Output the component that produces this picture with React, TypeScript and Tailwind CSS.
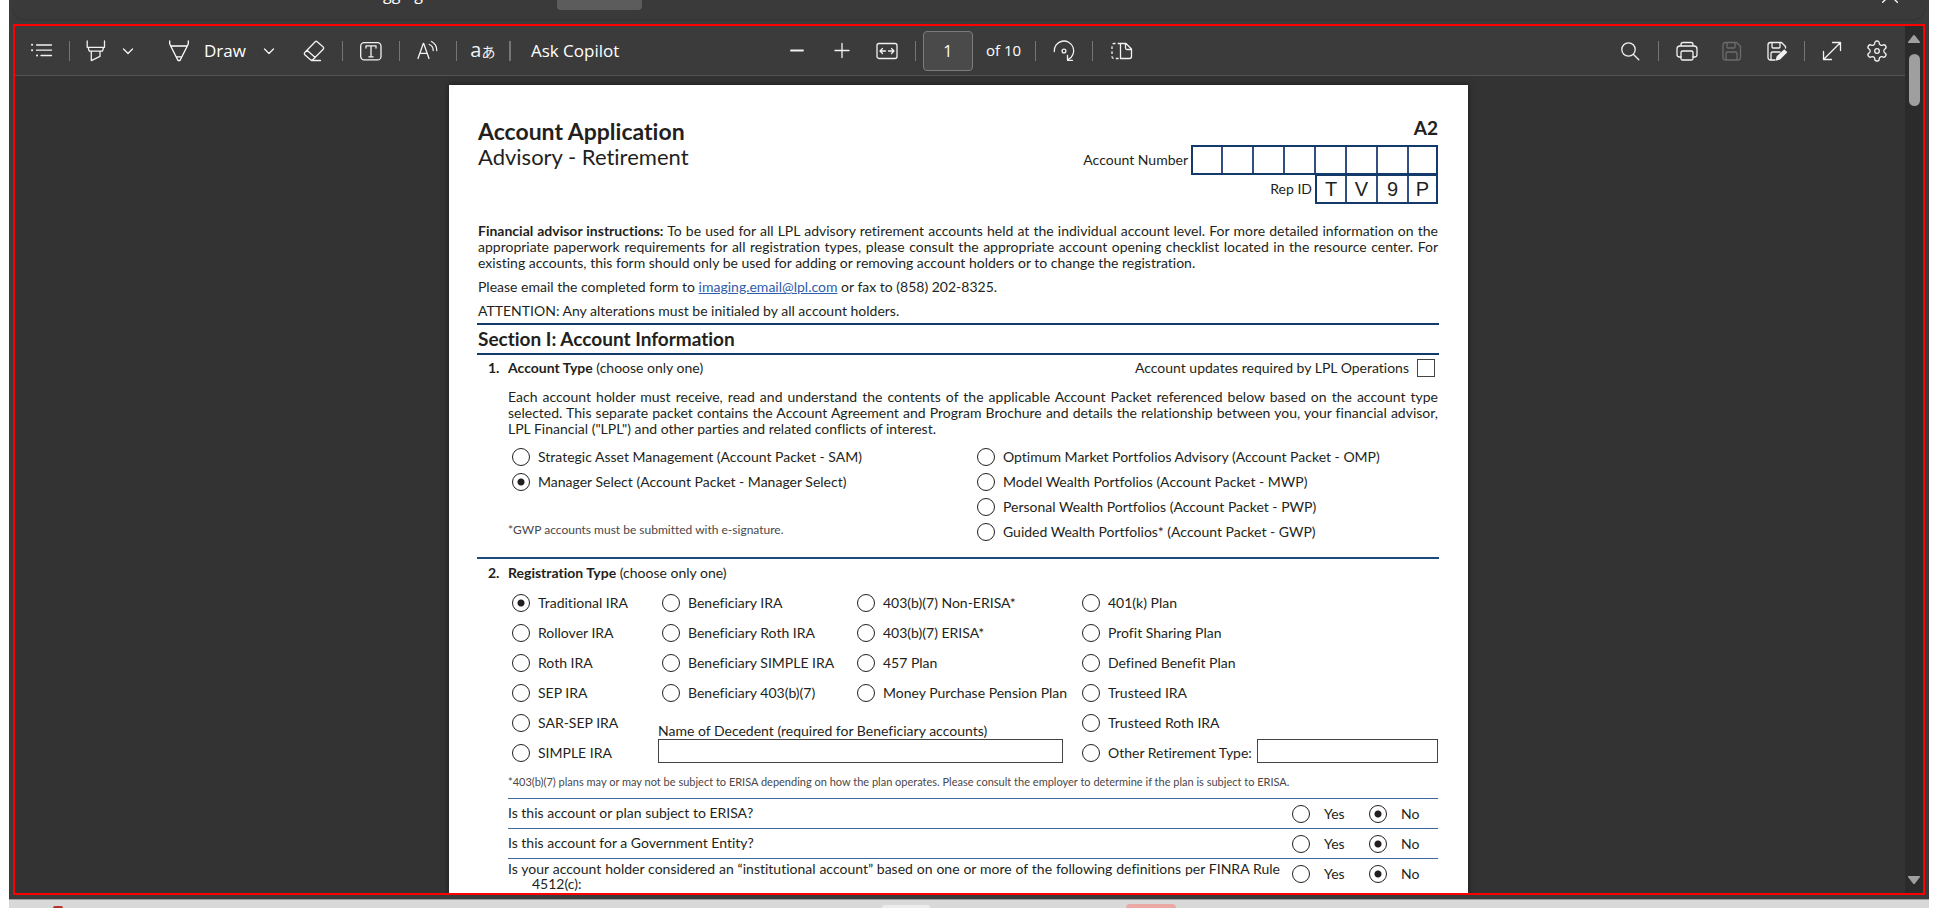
import React from "react";

const Icon = ({ children, className = "size-6 shrink-0" }: { children: React.ReactNode; className?: string }) => (
  <svg
    viewBox="0 0 24 24"
    className={className}
    fill="none"
    stroke="currentColor"
    strokeWidth="1.3"
    strokeLinecap="round"
    strokeLinejoin="round"
    aria-hidden="true"
  >
    {children}
  </svg>
);

const Chevron = () => (
  <Icon>
    <path d="M7.5 10 12 14.500l4.500-4.500" />
  </Icon>
);

const Divider = ({ className = "mx-2 w-px" }: { className?: string }) => (
  <span className={`h-5 shrink-0 bg-[#757575] ${className}`} />
);

const ToolButton = ({
  label,
  className = "w-10",
  disabled = false,
  children,
}: {
  label: string;
  className?: string;
  disabled?: boolean;
  children: React.ReactNode;
}) => (
  <button
    type="button"
    aria-label={label}
    disabled={disabled}
    className={`flex h-10 shrink-0 items-center justify-center text-[#f2f2f2] disabled:text-[#6c6c6c] ${className}`}
  >
    {children}
  </button>
);

function Toolbar() {
  return (
    <div
      role="toolbar"
      aria-label="PDF toolbar"
      className="grid h-[50px] shrink-0 grid-cols-[1fr_auto_1fr] items-center border-b border-[#525252] bg-[#3b3b3b] text-[17px] text-white"
    >
      <div className="flex items-center">
        <ToolButton label="Contents" className="w-[52px]">
          <Icon>
            <path d="M7.5 6h15M7.5 11.2h15M12 16.5h10.5" />
            <path d="M3 5.8h.1M3 11.2h.1M8 16.5h.1" strokeWidth="2" />
          </Icon>
        </ToolButton>
        <Divider className="mr-1.5 ml-0.5 w-px" />
        <ToolButton label="Highlight">
          <Icon>
            <path d="M3.2 2v6.3h17.3V2M4.2 8.5l1 3.7h13.3l1-3.7M7.3 12.4v9.2l8.7-4.2v-5" />
          </Icon>
        </ToolButton>
        <ToolButton label="Highlight colours" className="w-6">
          <Chevron />
        </ToolButton>
        <button type="button" className="ml-[27px] flex h-10 items-center gap-[13px]">
          <Icon>
            <path d="M2.700 2v2.800l1 2.200 7.300 14.500h2L20.300 7l1-2.200V2M3.700 7h16.600M10 17.800h4" />
          </Icon>
          Draw
        </button>
        <ToolButton label="Draw options" className="ml-[11px] w-6">
          <Chevron />
        </ToolButton>
        <ToolButton label="Erase" className="ml-[13px] w-10">
          <Icon>
            <path d="M13.200 2.700a1.500 1.500 0 0 1 2 0l6 5.300a1.500 1.500 0 0 1 0 2.200L11 20.500a2 2 0 0 1-2.800 0L2.800 15.700a1.500 1.500 0 0 1 0-2.200zM5 11.300l8.200 7.200M9.500 21.500h9" />
          </Icon>
        </ToolButton>
        <Divider />
        <ToolButton label="Add text">
          <Icon>
            <rect x="1.700" y="3.700" width="20.300" height="17.200" rx="3.500" />
            <path d="M7 9V6.800h10V9M12 6.800v11M9.800 17.800h4.400" />
          </Icon>
        </ToolButton>
        <Divider />
        <ToolButton label="Read aloud">
          <Icon>
            <path d="M2 19.500 7.300 4.500h.4l5.300 15M4 14.300h7M13.200 5.500c2.600 1 4 3.300 4 6M15.500 2.500c3.200 1.600 5.200 5 5.300 9" />
          </Icon>
        </ToolButton>
        <Divider />
        <ToolButton label="Translate" className="w-9">
          <span className="flex items-baseline font-['Open_Sans','Noto_Sans_CJK_JP',sans-serif]">
            <span className="text-xl leading-5">a</span>
            <span className="text-sm leading-5">あ</span>
          </span>
        </ToolButton>
        <Divider className="mx-2 w-0.5" />
        <button type="button" className="ml-3 h-10">
          Ask Copilot
        </button>
      </div>

      <div className="flex items-center pr-1">
        <ToolButton label="Zoom out" className="w-[45px]">
          <Icon>
            <path d="M6 11.500h12" strokeWidth="1.800" />
          </Icon>
        </ToolButton>
        <ToolButton label="Zoom in" className="w-[45px]">
          <Icon>
            <path d="M5 11.500h14M12 4.500v14" />
          </Icon>
        </ToolButton>
        <ToolButton label="Fit to width" className="w-[45px]">
          <Icon>
            <rect x="2" y="4.500" width="20" height="15" rx="2" />
            <path d="M5 12h5.500M7.500 9.500 5 12l2.500 2.500M13.500 12H19M16.500 9.500 19 12l-2.500 2.500" />
          </Icon>
        </ToolButton>
        <Divider className="mr-[7px] ml-[5px] w-px" />
        <input
          aria-label="Page number"
          defaultValue="1"
          className="h-10 w-[50px] rounded-sm border border-[#7c7c7c] bg-[#4a4a4a] text-center text-base text-white"
        />
        <span className="ml-[13px] text-[15px]">of 10</span>
        <Divider className="mr-2 ml-[14px] w-px" />
        <ToolButton label="Rotate">
          <Icon>
            <path d="M2.300 12.500a9.700 9.700 0 1 1 14.200 7.800M15.500 16.300v5h5" />
            <circle cx="12" cy="12" r="1.900" />
          </Icon>
        </ToolButton>
        <Divider />
        <ToolButton label="Page view">
          <Icon>
            <path d="M11.500 4.500h5.500l5.500 5.500v7.500a2 2 0 0 1-2 2h-9zM16.500 4.500v4.500a1.500 1.500 0 0 0 1.500 1.500h4.500" />
            <path d="M11.500 4.500H5a2 2 0 0 0-2 2v11a2 2 0 0 0 2 2h6.500" strokeDasharray="2.800 2.200" strokeLinecap="butt" />
          </Icon>
        </ToolButton>
      </div>

      <div className="flex items-center justify-end pr-2">
        <ToolButton label="Find">
          <Icon>
            <circle cx="10.500" cy="10.500" r="6.700" />
            <path d="m15.500 15.500 5.300 5.300" />
          </Icon>
        </ToolButton>
        <Divider />
        <ToolButton label="Print">
          <Icon>
            <path d="M6 18H4.500A2.500 2.500 0 0 1 2 15.500V10a3 3 0 0 1 3-3h14a3 3 0 0 1 3 3v5.500a2.500 2.500 0 0 1-2.500 2.500H18M6 7V5.500a2 2 0 0 1 2-2h8a2 2 0 0 1 2 2V7" />
            <rect x="6" y="12" width="12" height="9" rx="1.500" />
          </Icon>
        </ToolButton>
        <ToolButton label="Save" disabled className="ml-[5px] w-10">
          <Icon>
            <path d="M5.500 3.500h11l4 4v11a2.500 2.500 0 0 1-2.500 2.500H5.500A2.500 2.500 0 0 1 3 18.500V6a2.500 2.500 0 0 1 2.500-2.500zM7 3.500V8a1 1 0 0 0 1 1h6a1 1 0 0 0 1-1V3.500M6 21v-6.500a1.500 1.500 0 0 1 1.500-1.500h8a1.500 1.500 0 0 1 1.500 1.500V21" />
          </Icon>
        </ToolButton>
        <ToolButton label="Save as" className="ml-[5px] w-10">
          <Icon>
            <path d="M20.500 9V7.500l-4-4h-11A2.500 2.500 0 0 0 3 6v12.500A2.500 2.500 0 0 0 5.500 21H10M7 3.500V8a1 1 0 0 0 1 1h6a1 1 0 0 0 1-1V3.500M6 21v-6.500A1.500 1.500 0 0 1 7.500 13H15" />
            <path d="m11.500 20.800 1-3.300 6.800-6.200 2 2-6.500 6.500z" fill="currentColor" strokeWidth="1.600" />
          </Icon>
        </ToolButton>
        <Divider className="mx-[7px] w-px" />
        <ToolButton label="Full screen">
          <Icon>
            <path d="M3.500 20.500 20.500 3.500M12.500 3.500h8v8M3.500 12.500v8h8" />
          </Icon>
        </ToolButton>
        <ToolButton label="Settings" className="ml-[5px] w-10">
          <Icon>
            <path d="M12.220 2h-.44a2 2 0 0 0-2 2v.18a2 2 0 0 1-1 1.730l-.43.250a2 2 0 0 1-2 0l-.15-.08a2 2 0 0 0-2.730.730l-.22.380a2 2 0 0 0 .730 2.730l.150.100a2 2 0 0 1 1 1.720v.510a2 2 0 0 1-1 1.740l-.15.090a2 2 0 0 0-.73 2.730l.220.380a2 2 0 0 0 2.730.730l.150-.080a2 2 0 0 1 2 0l.430.250a2 2 0 0 1 1 1.730V20a2 2 0 0 0 2 2h.440a2 2 0 0 0 2-2v-.180a2 2 0 0 1 1-1.730l.430-.250a2 2 0 0 1 2 0l.150.080a2 2 0 0 0 2.730-.730l.220-.390a2 2 0 0 0-.730-2.730l-.150-.080a2 2 0 0 1-1-1.740v-.500a2 2 0 0 1 1-1.740l.150-.090a2 2 0 0 0 .730-2.730l-.220-.380a2 2 0 0 0-2.730-.730l-.150.080a2 2 0 0 1-2 0l-.430-.250a2 2 0 0 1-1-1.730V4a2 2 0 0 0-2-2z" />
            <circle cx="12" cy="12" r="2.300" />
          </Icon>
        </ToolButton>
      </div>
    </div>
  );
}

function Radio({
  name,
  label,
  checked = false,
  gap = "gap-2",
}: {
  name: string;
  label: string;
  checked?: boolean;
  gap?: string;
}) {
  return (
    <label className={`flex items-center whitespace-nowrap ${gap}`}>
      <input
        type="radio"
        name={name}
        defaultChecked={checked}
        className="size-[18px] shrink-0 appearance-none rounded-full border border-[#231f20] checked:bg-[radial-gradient(circle,#231f20_3px,transparent_4px)]"
      />
      {label}
    </label>
  );
}

const Lines = ({ lines }: { lines: React.ReactNode[] }) => (
  <p>
    {lines.map((line, i) => (
      <span key={i} className={`block ${i < lines.length - 1 ? "[text-align-last:justify]" : ""}`}>
        {line}
      </span>
    ))}
  </p>
);

const Heading = ({ n, title }: { n: string; title: string }) => (
  <h3 className="flex">
    <span className="w-[20px] font-bold">{n}</span>
    <span>
      <b>{title}</b> (choose only one)
    </span>
  </h3>
);

const CodeBoxes = ({ values, label }: { values: string[]; label: string }) => (
  <span className="flex border-2 border-[#14396b]">
    {values.map((v, i) => (
      <input
        key={i}
        aria-label={`${label} ${i + 1}`}
        maxLength={1}
        defaultValue={v}
        className="h-[26px] w-[31px] border-l-2 border-[#2f5080] text-center font-['Liberation_Sans',Arial,sans-serif] text-xl first:w-[28px] first:border-l-0 last:w-[29px]"
      />
    ))}
  </span>
);

const Question = ({ name, children }: { name: string; children: React.ReactNode }) => (
  <div className="flex h-[30px] items-start border-t border-[#41689a]">
    <div className="min-w-0 flex-1">{children}</div>
    <div className="flex h-full w-[146px] items-center">
      <div className="w-[77px]">
        <Radio name={name} label="Yes" gap="gap-[14px]" />
      </div>
      <Radio name={name} label="No" checked gap="gap-[14px]" />
    </div>
  </div>
);

const col1 = ["Traditional IRA", "Rollover IRA", "Roth IRA", "SEP IRA", "SAR-SEP IRA", "SIMPLE IRA"];
const col2 = ["Beneficiary IRA", "Beneficiary Roth IRA", "Beneficiary SIMPLE IRA", "Beneficiary 403(b)(7)"];
const col3 = ["403(b)(7) Non-ERISA*", "403(b)(7) ERISA*", "457 Plan", "Money Purchase Pension Plan"];
const col4 = ["401(k) Plan", "Profit Sharing Plan", "Defined Benefit Plan", "Trusteed IRA", "Trusteed Roth IRA"];

function Document() {
  return (
    <article className="mx-auto w-full max-w-[1019px] bg-white pt-[33px] pr-[29px] pb-10 pl-7 font-['Lato',sans-serif] text-sm leading-4 text-[#231f20] shadow-[0_0_6px_rgba(0,0,0,0.5)] [font-variant-ligatures:none]">
      <header className="flex h-[105px] items-start justify-between px-px">
        <div>
          <h1 className="text-[23px] leading-[26px] font-bold">Account Application</h1>
          <p className="text-[22px] leading-[26px]">Advisory - Retirement</p>
        </div>
        <div className="flex flex-col items-end">
          <span className="h-[27px] text-[19px] leading-5 font-bold">A2</span>
          <div className="flex items-center gap-[3px]">
            Account Number
            <CodeBoxes label="Account number" values={["", "", "", "", "", "", "", ""]} />
          </div>
          <div className="-mt-px flex items-center gap-[3px]">
            Rep ID
            <CodeBoxes label="Rep ID" values={["T", "V", "9", "P"]} />
          </div>
        </div>
      </header>

      <div className="flex flex-col gap-2 px-px">
        <Lines
          lines={[
            <>
              <b>Financial advisor instructions:</b> To be used for all LPL advisory retirement accounts held at the
              individual account level. For more detailed information on the
            </>,
            "appropriate paperwork requirements for all registration types, please consult the appropriate account opening checklist located in the resource center. For",
            "existing accounts, this form should only be used for adding or removing account holders or to change the registration.",
          ]}
        />
        <p>
          Please email the completed form to{" "}
          <a href="mailto:imaging.email@lpl.com" className="text-[#2f5cab] underline">
            imaging.email@lpl.com
          </a>{" "}
          or fax to (858) 202-8325.
        </p>
        <p>ATTENTION: Any alterations must be initialed by all account holders.</p>
      </div>

      <h2 className="mt-1 flex h-8 items-center border-y-2 border-[#14396b] px-px text-[19px] leading-6 font-bold">
        Section I: Account Information
      </h2>

      <section className="pr-px pl-[11px]">
        <div className="flex h-[26px] items-center justify-between">
          <Heading n="1." title="Account Type" />
          <label className="flex items-center gap-2 pr-[3px]">
            Account updates required by LPL Operations
            <input type="checkbox" className="size-[18px] appearance-none border border-[#444]" />
          </label>
        </div>
        <div className="mt-2 pl-[20px]">
          <Lines
            lines={[
              "Each account holder must receive, read and understand the contents of the applicable Account Packet referenced below based on the account type",
              "selected. This separate packet contains the Account Agreement and Program Brochure and details the relationship between you, your financial advisor,",
              <>LPL Financial ("LPL") and other parties and related conflicts of interest.</>,
            ]}
          />
          <div className="mt-[11px] flex">
            <div className="flex w-[465px] flex-col gap-[7px] pl-1">
              <Radio name="account-type" label="Strategic Asset Management (Account Packet - SAM)" />
              <Radio name="account-type" label="Manager Select (Account Packet - Manager Select)" checked />
              <p className="-ml-1 pt-6 text-xs text-[#4a4749]">*GWP accounts must be submitted with e-signature.</p>
            </div>
            <div className="flex flex-1 flex-col gap-[7px] pl-1">
              <Radio name="account-type" label="Optimum Market Portfolios Advisory (Account Packet - OMP)" />
              <Radio name="account-type" label="Model Wealth Portfolios (Account Packet - MWP)" />
              <Radio name="account-type" label="Personal Wealth Portfolios (Account Packet - PWP)" />
              <Radio name="account-type" label="Guided Wealth Portfolios* (Account Packet - GWP)" />
            </div>
          </div>
        </div>
      </section>

      <section className="mt-4 border-t-2 border-[#1c4b7c] pt-[6px] pr-px pl-[11px]">
        <Heading n="2." title="Registration Type" />
        <div className="mt-[7px] pl-[20px]">
          <div className="flex pl-1">
            <div className="grid w-[150px] auto-rows-[30px]">
              {col1.map((l, i) => (
                <Radio key={l} name="registration" label={l} checked={i === 0} />
              ))}
            </div>
            <div className="w-[420px]">
              <div className="flex">
                <div className="grid w-[195px] auto-rows-[30px]">
                  {col2.map((l) => (
                    <Radio key={l} name="registration" label={l} />
                  ))}
                </div>
                <div className="grid auto-rows-[30px]">
                  {col3.map((l) => (
                    <Radio key={l} name="registration" label={l} />
                  ))}
                </div>
              </div>
              <label className="-ml-1 flex w-[405px] flex-col pt-[15px]">
                Name of Decedent (required for Beneficiary accounts)
                <input className="h-6 w-full border border-[#444]" />
              </label>
            </div>
            <div className="flex-1">
              <div className="grid auto-rows-[30px]">
                {col4.map((l) => (
                  <Radio key={l} name="registration" label={l} />
                ))}
              </div>
              <div className="flex h-[30px] items-center">
                <div className="w-[175px]">
                  <Radio name="registration" label="Other Retirement Type:" />
                </div>
                <input aria-label="Other retirement type" className="mb-1 h-6 min-w-0 flex-1 border border-[#444]" />
              </div>
            </div>
          </div>
          <p className="mt-[6px] h-[24px] text-[11px] leading-4 text-[#4a4749]">
            *403(b)(7) plans may or may not be subject to ERISA depending on how the plan operates. Please consult the
            employer to determine if the plan is subject to ERISA.
          </p>
          <Question name="erisa">
            <p className="pt-[6px]">Is this account or plan subject to ERISA?</p>
          </Question>
          <Question name="government">
            <p className="pt-[6px]">Is this account for a Government Entity?</p>
          </Question>
          <Question name="institutional">
            <p className="mr-3 pt-0.5 leading-[15px]">
              <span className="block [text-align-last:justify]">
                Is your account holder considered an “institutional account” based on one or more of the following
                definitions per FINRA Rule
              </span>
              <span className="block pl-6">4512(c):</span>
            </p>
          </Question>
        </div>
      </section>
    </article>
  );
}

const Scrollbar = () => (
  <div className="flex w-[18px] shrink-0 flex-col items-center bg-[#2b2b2b] pt-2 pb-2 text-[#9f9f9f]">
    <svg viewBox="0 0 14 10" className="h-[10px] w-[14px]" fill="currentColor" aria-hidden="true">
      <path d="M6 1.500a1.300 1.300 0 0 1 2 0l5 6.500q.5 1-.7 1H1.700Q.5 9 1 8z" />
    </svg>
    <div className="mt-[10px] h-[52px] w-[11px] rounded-full bg-[#9f9f9f]" />
    <svg viewBox="0 0 14 10" className="mt-auto h-[10px] w-[14px]" fill="currentColor" aria-hidden="true">
      <path d="M6 8.500a1.300 1.300 0 0 0 2 0l5-6.500q.5-1-.7-1H1.700Q.5 1 1 2z" />
    </svg>
  </div>
);

export default function App() {
  return (
    <div className="flex h-screen flex-col bg-white px-[9px] pb-[11px] font-['Open_Sans','Noto_Sans',sans-serif]">
      <main className="flex min-h-0 flex-1 flex-col bg-[#3b3b3b] px-1 pb-1">
        <div className="mb-1 flex h-5 shrink-0 items-start overflow-hidden rounded-b-xl border-b border-[#353535] bg-[#3a3a3a] pl-[370px] text-white shadow-[0_1px_1px_#363636]">
          <span className="-mt-[18px] text-base leading-6">gging</span>
          <span className="ml-[134px] h-[10px] w-[85px] rounded-b bg-[#5c5c5c]" />
          <button type="button" aria-label="Close" className="-mt-[13px] mr-[27px] ml-auto">
            <Icon className="size-4">
              <path d="M1 1l22 22M23 1L1 23" strokeWidth="2" />
            </Icon>
          </button>
        </div>
        <div className="flex min-h-0 flex-1 border-2 border-[#ff0000]">
          <div className="flex min-w-0 flex-1 flex-col">
            <Toolbar />
            <div className="min-h-0 flex-1 overflow-hidden bg-[#333333] pt-[9px] pr-[3px]">
              <Document />
            </div>
          </div>
          <Scrollbar />
        </div>
      </main>
      <footer className="flex h-[9px] shrink-0 items-end overflow-hidden border-t border-[#9d9d9d] bg-[#d9d9d9]">
        <span className="ml-11 h-0.5 w-[10px] rounded-t-full bg-[#b5352c]" />
        <span className="ml-[819px] h-[3px] w-12 rounded-t bg-[#ececec]" />
        <span className="ml-[196px] h-1 w-[50px] rounded-t bg-[#eca9a4]" />
      </footer>
    </div>
  );
}
